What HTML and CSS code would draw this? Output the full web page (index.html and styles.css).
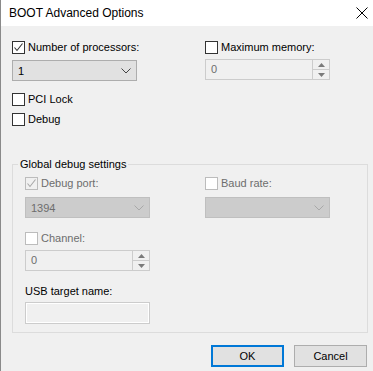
FILE: index.html
```html
<!DOCTYPE html>
<html lang="en">
<head>
    <meta charset="UTF-8">
    <title>BOOT Advanced Options</title>
    <link rel="stylesheet" href="styles.css">
</head>
<body>
    <div class="window">
        <div class="titlebar">
            <span class="title">BOOT Advanced Options</span>
            <svg class="close" width="12" height="12" viewBox="0 0 12 12"><path d="M0.5 0.5L11.5 11.5M11.5 0.5L0.5 11.5" stroke="#000" stroke-width="1" fill="none"/></svg>
        </div>
        <div class="content">
            <div class="top">
                <div class="col">
                    <label class="check">
                        <span class="box"><svg width="11" height="11" viewBox="0 0 11 11"><path d="M1.5 5.5L4 8.5L9.5 1.5" stroke="#333" stroke-width="1.1" fill="none"/></svg></span>
                        Number of processors:
                    </label>
                    <div class="combo"><span>1</span><svg width="10" height="6" viewBox="0 0 10 6"><path d="M0.5 0.5L5 5L9.5 0.5" stroke="#444" fill="none"/></svg></div>
                    <label class="check pci"><span class="box"></span>PCI Lock</label>
                    <label class="check debug"><span class="box"></span>Debug</label>
                </div>
                <div class="col">
                    <label class="check"><span class="box"></span>Maximum memory:</label>
                    <div class="spin">
                        <span class="val">0</span>
                        <span class="arrows">
                            <span class="arr"><svg width="7" height="4" viewBox="0 0 7 4"><path d="M0 4L3.5 0L7 4Z" fill="#7a7a7a"/></svg></span>
                            <span class="arr"><svg width="7" height="4" viewBox="0 0 7 4"><path d="M0 0L3.5 4L7 0Z" fill="#7a7a7a"/></svg></span>
                        </span>
                    </div>
                </div>
            </div>

            <fieldset class="group">
                <legend>Global debug settings</legend>
                <div class="top">
                    <div class="col">
                        <label class="check off">
                            <span class="box"><svg width="11" height="11" viewBox="0 0 11 11"><path d="M1.5 5.5L4 8.5L9.5 1.5" stroke="#a8a8a8" stroke-width="1.1" fill="none"/></svg></span>
                            Debug port:
                        </label>
                        <div class="combo off"><span>1394</span><svg width="10" height="6" viewBox="0 0 10 6"><path d="M0.5 0.5L5 5L9.5 0.5" stroke="#a8a8a8" fill="none"/></svg></div>
                        <label class="check off channel"><span class="box white"></span>Channel:</label>
                        <div class="spin">
                            <span class="val">0</span>
                            <span class="arrows">
                                <span class="arr"><svg width="7" height="4" viewBox="0 0 7 4"><path d="M0 4L3.5 0L7 4Z" fill="#7a7a7a"/></svg></span>
                                <span class="arr"><svg width="7" height="4" viewBox="0 0 7 4"><path d="M0 0L3.5 4L7 0Z" fill="#7a7a7a"/></svg></span>
                            </span>
                        </div>
                    </div>
                    <div class="col">
                        <label class="check off"><span class="box white"></span>Baud rate:</label>
                        <div class="combo off"><span></span><svg width="10" height="6" viewBox="0 0 10 6"><path d="M0.5 0.5L5 5L9.5 0.5" stroke="#a8a8a8" fill="none"/></svg></div>
                    </div>
                </div>
                <div class="usb-label">USB target name:</div>
                <div class="textbox"></div>
            </fieldset>

            <div class="buttons">
                <button class="btn default">OK</button>
                <button class="btn">Cancel</button>
            </div>
        </div>
    </div>
</body>
</html>
```

FILE: styles.css
```css
*{
    box-sizing: border-box;
}
html,body{
    margin: 0;padding: 0;
}
body{
    font-family: "Liberation Sans", Arial, sans-serif;font-size: 11px;color: #000;
}
.window{
    width: 373px;height: 371px;background: #f0f0f0;border-left: 1px solid #8a8a8a;overflow: hidden;
}
.titlebar{
    height: 26px;background: #fff;display: flex;align-items: center;justify-content: space-between;
    padding: 0 5px 0 8px;
}
.titlebar .title{
    font-size: 12px;
}
.content{
    padding: 13px 5px 0 11px;
}
.top{
    display: flex;
}
.top .col{
    width: 193px;display: flex;flex-direction: column;align-items: flex-start;flex: none;
}
.top .col + .col{
    width: auto;flex: 1;
}
.check{
    display: flex;align-items: center;height: 17px;line-height: 17px;
}
.check .box{
    width: 13px;height: 13px;border: 1px solid #333;background: #fff;margin-right: 3px;
    display: flex;flex: none;
}
.check.off{
    color: #6d6d6d;
}
.check.off .box{
    border-color: #bcbcbc;background: #f0f0f0;
}
.check.off .box.white{
    background: #fff;
}
.combo{
    width: 125px;height: 21px;border: 1px solid #adadad;background: #e1e1e1;margin-top: 4px;
    display: flex;align-items: center;justify-content: space-between;padding: 0 5px 0 5px;
}
.combo.off{
    background: #cccccc;border-color: #bfbfbf;color: #6d6d6d;margin-top: 5px;
}
.pci{
    margin-top: 10px;
}
.debug{
    margin-top: 3px;
}
.spin{
    width: 125px;height: 21px;border: 1px solid #cccccc;margin-top: 3px;color: #6d6d6d;
    display: flex;justify-content: space-between;
}
.spin .val{
    padding-left: 5px;line-height: 19px;
}
.spin .arrows{
    display: flex;flex-direction: column;width: 17px;
}
.spin .arr{
    flex: 1;border-left: 1px solid #cccccc;display: flex;align-items: center;justify-content: center;
}
.spin .arr + .arr{
    border-top: 1px solid #cccccc;
}
.group{
    margin: 28px 0 0 0;padding: 2px 12px 8px 12px;border: 1px solid #dcdcdc;min-width: 0;
}
.group legend{
    padding: 0 2px;margin-left: -7px;line-height: 17px;
}
.group .top .col{
    width: 180px;
}
.group .top .col + .col{
    width: auto;
}
.channel{
    margin-top: 12px;
}
.usb-label{
    margin-top: 12px;line-height: 17px;
}
.textbox{
    width: 125px;height: 22px;border: 1px solid #cccccc;box-shadow: inset 0 0 0 1px #fff;margin-top: 2px;
}
.buttons{
    display: flex;justify-content: flex-end;gap: 10px;margin-top: 12px;padding-right: 1px;
}
.btn{
    width: 73px;height: 22px;border: 1px solid #adadad;background: #e1e1e1;font: inherit;padding: 0;color: #000;
}
.btn.default{
    border: 2px solid #0078d7;
}
```
